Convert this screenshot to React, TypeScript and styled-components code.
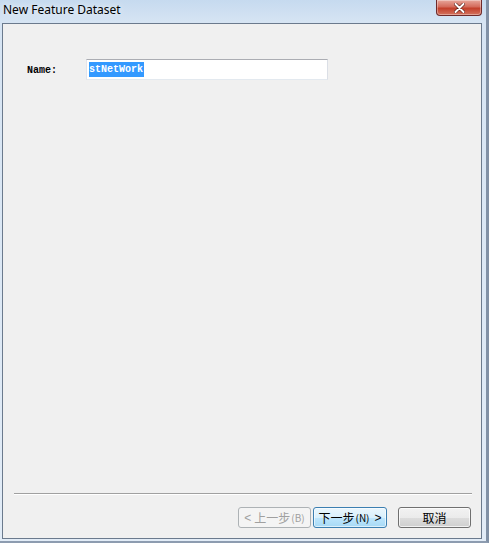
import React from "react";
import styled, { createGlobalStyle } from "styled-components";

const Global = createGlobalStyle`
  html, body { margin: 0; padding: 0; background: #dbe7f4; }
  #root { width: 489px; height: 543px; }
`;

const Window = styled.div`
  box-sizing: border-box;
  width: 489px;
  height: 543px;
  display: flex;
  flex-direction: column;
  background: linear-gradient(180deg, #c6daef 0px, #d6e4f3 22px, #e2ecf7 100%);
  border-right: 3px solid #8191a6;
  border-bottom: 2px solid #8d9cb0;
  overflow: hidden;
`;

const TitleBar = styled.div`
  height: 23px;
  display: flex;
  align-items: flex-start;
  justify-content: space-between;
  padding-left: 3px;
`;

const Title = styled.span`
  font-family: "Noto Sans", "Open Sans", sans-serif;
  font-size: 12px;
  line-height: 20px;
  color: #000;
  text-shadow: 0 0 6px rgba(255, 255, 255, 0.9);
`;

const CloseButton = styled.div`
  width: 46px;
  height: 16px;
  margin-right: 4px;
  box-sizing: border-box;
  border: 1px solid #6e2a2a;
  border-top: none;
  border-radius: 0 0 4px 4px;
  background: linear-gradient(180deg, #e7a79b 0%, #d46b5b 45%, #c3402b 55%, #d4735f 100%);
  box-shadow: inset 0 0 0 1px rgba(255, 255, 255, 0.35);
  display: flex;
  align-items: center;
  justify-content: center;
`;

const Client = styled.div`
  flex: 1;
  margin: 0 4px 2px 2px;
  border: 1px solid #6b7a8d;
  background: #f0f0f0;
  display: flex;
  flex-direction: column;
`;

const Content = styled.div`
  flex: 1;
  padding: 35px 0 0 24px;
`;

const FieldRow = styled.div`
  display: flex;
  align-items: center;
`;

const Label = styled.span`
  width: 59px;
  padding-top: 1px;
  font-family: "Liberation Mono", "DejaVu Sans Mono", monospace;
  font-size: 10px;
  font-weight: bold;
  color: #000;
`;

const TextBox = styled.div`
  box-sizing: border-box;
  width: 242px;
  height: 21px;
  background: #fff;
  border: 1px solid #abadb3;
  border-left-color: #e2e3ea;
  border-right-color: #dbdfe6;
  border-bottom-color: #e3e9ef;
  padding: 2px 0 0 2px;
  display: flex;
  align-items: flex-start;
`;

const Selected = styled.span`
  background: #3399ff;
  color: #fff;
  font-family: "Liberation Mono", "DejaVu Sans Mono", monospace;
  font-size: 10px;
  font-weight: bold;
  line-height: 15px;
  height: 15px;
  padding: 0 1px 0 0;
`;

const Footer = styled.div`
  padding: 0 9px 10px 11px;
  display: flex;
  flex-direction: column;
  gap: 12px;
`;

const Separator = styled.div`
  height: 0;
  border-top: 1px solid #a0a0a0;
  border-bottom: 1px solid #ffffff;
`;

const ButtonRow = styled.div`
  display: flex;
  justify-content: flex-end;
  padding-right: 1px;
`;

type Variant = "disabled" | "focused" | "normal";

const Button = styled.div<{ $variant: Variant; $gap?: number }>`
  box-sizing: border-box;
  width: ${(p) => (p.$variant === "focused" ? 74 : 73)}px;
  height: 21px;
  margin-left: ${(p) => p.$gap ?? 0}px;
  border-radius: 3px;
  display: flex;
  align-items: center;
  justify-content: center;
  font-family: "Noto Sans CJK SC", "Noto Sans", sans-serif;
  font-size: 12px;
  white-space: nowrap;
  ${(p) =>
    p.$variant === "disabled"
      ? `
    border: 1px solid #adb2b5;
    background: #f4f4f4;
    color: #a0a0a0;
  `
      : p.$variant === "focused"
      ? `
    border: 1px solid #3c7fb1;
    background: linear-gradient(180deg, #eaf6fd 0%, #d9f0fc 50%, #bee6fd 51%, #a7d9f5 100%);
    box-shadow: inset 0 0 0 1px rgba(255,255,255,0.6);
    color: #000;
  `
      : `
    border: 1px solid #707070;
    background: linear-gradient(180deg, #f2f2f2 0%, #ebebeb 50%, #dddddd 51%, #cfcfcf 100%);
    box-shadow: inset 0 0 0 1px rgba(255,255,255,0.7);
    color: #000;
  `}
`;

const Mnemonic = styled.span`
  font-size: 10px;
  margin-left: 1px;
`;

const Arrow = styled.span<{ $side: "left" | "right" }>`
  font-family: "Liberation Sans", sans-serif;
  font-size: 12px;
  ${(p) => (p.$side === "left" ? "margin-right: 3px;" : "margin-left: 5px;")}
`;

export default function App() {
  return (
    <>
      <Global />
      <Window>
        <TitleBar>
          <Title>New Feature Dataset</Title>
          <CloseButton>
            <svg width="11" height="10" viewBox="0 0 11 10">
              <path
                d="M1.5 1 L9.5 9 M9.5 1 L1.5 9"
                stroke="#5a1a14"
                strokeWidth="3.2"
                strokeLinecap="round"
              />
              <path
                d="M1.5 1 L9.5 9 M9.5 1 L1.5 9"
                stroke="#ffffff"
                strokeWidth="2"
                strokeLinecap="round"
              />
            </svg>
          </CloseButton>
        </TitleBar>
        <Client>
          <Content>
            <FieldRow>
              <Label>Name:</Label>
              <TextBox>
                <Selected>stNetWork</Selected>
              </TextBox>
            </FieldRow>
          </Content>
          <Footer>
            <Separator />
            <ButtonRow>
              <Button $variant="disabled">
                <Arrow $side="left">&lt;</Arrow>上一步<Mnemonic>(B)</Mnemonic>
              </Button>
              <Button $variant="focused" $gap={2}>
                下一步<Mnemonic>(N)</Mnemonic>
                <Arrow $side="right">&gt;</Arrow>
              </Button>
              <Button $variant="normal" $gap={11}>
                取消
              </Button>
            </ButtonRow>
          </Footer>
        </Client>
      </Window>
    </>
  );
}
